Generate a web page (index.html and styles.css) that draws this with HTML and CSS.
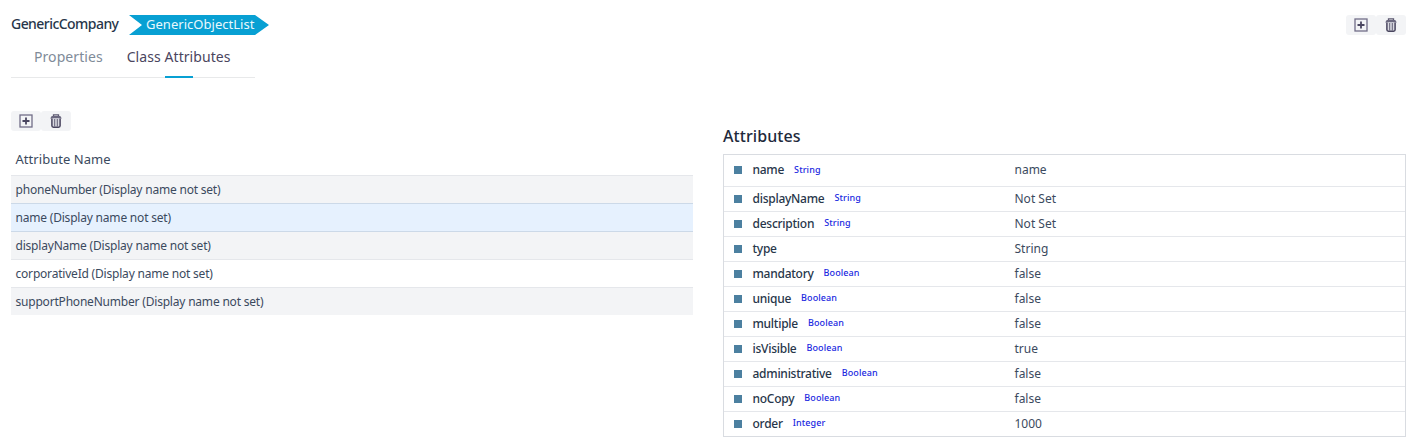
FILE: index.html
```
<!DOCTYPE html>
<html lang="en">
<head>
<meta charset="utf-8">
<title>GenericCompany</title>
<link rel="stylesheet" href="styles.css">
</head>
<body>
<svg class="defs" width="0" height="0">
  <symbol id="add" viewBox="0 0 14 14"><rect x="1" y="1" width="12" height="12" fill="none" stroke="#716e88" stroke-width="1.3"/><path d="M7 3.5v7M3.5 7h7" stroke="#4a4660" stroke-width="1.8"/></symbol>
  <symbol id="trash" viewBox="0 0 14 14"><path d="M4.5 2.2V.8h5v1.4" fill="none" stroke="#5c5870" stroke-width="1.3"/><path d="M2.7 2h8.6l1.5 2.4H1.2z" fill="#6b687f"/><path d="M2.9 4.4v7.4q0 1.4 1.5 1.4h5.2q1.5 0 1.5-1.4V4.4" fill="#d9d9e1" stroke="#49455f" stroke-width="1.5"/><path d="M5.7 5v7.5M8.3 5v7.5" stroke="#625f76" stroke-width="1"/></symbol>
</svg>
<header class="top">
  <div class="crumbs"><b class="company">GenericCompany</b><span class="crumb">GenericObjectList</span></div>
  <div class="tools"><button><svg><use href="#add"/></svg></button><button><svg><use href="#trash"/></svg></button></div>
</header>
<nav class="tabs"><span class="tab">Properties</span><span class="tab active">Class Attributes</span></nav>
<main class="content">
  <section class="left">
    <div class="tools"><button><svg><use href="#add"/></svg></button><button><svg><use href="#trash"/></svg></button></div>
    <div class="list">
      <div class="head">Attribute Name</div>
      <div class="item">phoneNumber (Display name not set)</div>
      <div class="item selected">name (Display name not set)</div>
      <div class="item">displayName (Display name not set)</div>
      <div class="item">corporativeId (Display name not set)</div>
      <div class="item">supportPhoneNumber (Display name not set)</div>
    </div>
  </section>
  <section class="right">
    <h2><span>Attributes</span></h2>
    <div class="props">
      <div class="row first"><i></i><b>name</b><em>String</em><span>name</span></div>
      <div class="row"><i></i><b>displayName</b><em>String</em><span>Not Set</span></div>
      <div class="row"><i></i><b>description</b><em>String</em><span>Not Set</span></div>
      <div class="row"><i></i><b>type</b><span>String</span></div>
      <div class="row"><i></i><b>mandatory</b><em>Boolean</em><span>false</span></div>
      <div class="row"><i></i><b>unique</b><em>Boolean</em><span>false</span></div>
      <div class="row"><i></i><b>multiple</b><em>Boolean</em><span>false</span></div>
      <div class="row"><i></i><b>isVisible</b><em>Boolean</em><span>true</span></div>
      <div class="row"><i></i><b>administrative</b><em>Boolean</em><span>false</span></div>
      <div class="row"><i></i><b>noCopy</b><em>Boolean</em><span>false</span></div>
      <div class="row"><i></i><b>order</b><em>Integer</em><span>1000</span></div>
    </div>
  </section>
</main>
</body>
</html>
```
FILE: styles.css
```
* { box-sizing: border-box; }
body { margin: 0; padding: 14px 9px 0 11px; background: #fff; color: #3b4a5e; font: 12px/20px "Noto Sans", sans-serif; white-space: nowrap; }
.defs { display: block; height: 0; }
.top { display: flex; justify-content: space-between; height: 21px; }
.crumbs { display: flex; }
.company { width: 118px; color: #27364a; font-size: 14px; font-weight: 500; letter-spacing: -.55px; }
.crumb { width: 140px; height: 20px; margin-top: 1px; padding-left: 17px; line-height: 18px; font-size: 13px; color: #e9f8fd; letter-spacing: .03px; background: #08a0d3; clip-path: polygon(0 0, 126px 0, 100% 50%, 126px 100%, 0 100%, 13px 50%); }
.tools { display: flex; height: 20px; }
.top .tools { margin-top: 1px; }
.tools button { display: grid; place-items: center; width: 30px; height: 20px; padding: 0; border: 0; border-radius: 3px; background: #f3f4f6; }
.tools svg { width: 14px; height: 14px; }
.tabs { display: flex; width: 244px; height: 43px; padding-left: 23px; gap: 24px; border-bottom: 1px solid #e8e9ea; font-size: 14px; letter-spacing: .07px; }
.tab { height: 43px; padding-top: 12px; color: #808b99; }
.active { color: #4a455e; background: linear-gradient(#08a0d3, #08a0d3) 38px bottom / 28px 2px no-repeat; }
.content { display: grid; grid-template-columns: 682px 683px; gap: 30px; padding-top: 33px; }
.list { margin-top: 12px; }
.head { height: 32px; padding: 6px 4px 0 4.5px; font-size: 13px; letter-spacing: .05px; }
.item { height: 28px; padding: 4px 4px 0 4.5px; border-top: 1px solid #e5e7eb; letter-spacing: -.2px; }
.item:nth-child(even) { background: #f3f4f6; }
.item.selected { background: #e6f1fe; border-color: #ccd9e8; }
.item.selected + .item { border-color: #ccd9e8; }
h2 { margin: 15px 0 8px; color: #1e293b; font-size: 16px; line-height: 20px; font-weight: 500; letter-spacing: .07px; }
.props { border: 1px solid #d9dce1; }
.row { display: grid; grid-template-columns: 8px auto auto 1fr; align-items: center; height: 25px; padding-left: 10px; border-bottom: 1px solid #e5e7eb; position: relative; }
.row:last-child { border: 0; height: 24px; }
.row.first { height: 32px; padding-bottom: 1px; }
.row i { width: 8px; height: 8px; background: #4c80a0; }
.row b { margin-left: 10.5px; color: #27364a; font-weight: 500; letter-spacing: -.26px; }
.row em { margin: 0 0 2px 10px; line-height: 18px; color: #2028df; font-style: normal; font-size: 9px; font-weight: 500; letter-spacing: .1px; }
.row.first em { margin-bottom: 0; }
.row span { position: absolute; left: 290.5px; }
.row.first span { padding-bottom: 2px; }
```
